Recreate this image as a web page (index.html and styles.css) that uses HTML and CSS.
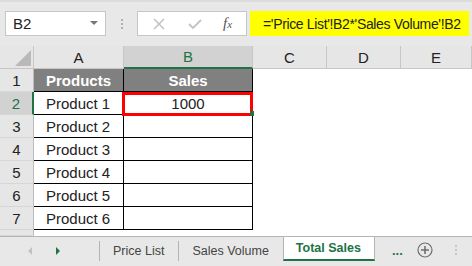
FILE: index.html
```html
<!DOCTYPE html>
<html lang="en">
<head>
  <meta charset="UTF-8">
  <title>Total Sales</title>
  <link rel="stylesheet" href="styles.css">
</head>
<body>

<div id="app">
  <div class="toolbar">
    <div class="name-box">
      <span>B2</span>
      <span class="drop"></span>
    </div>
    <div class="grip"><i></i><i></i><i></i></div>
    <div class="fx-box">
      <svg width="12" height="12" viewBox="0 0 12 12"><path d="M1 1 L11 11 M11 1 L1 11" stroke="#c3c3c3" stroke-width="1.6" fill="none"/></svg>
      <svg width="14" height="12" viewBox="0 0 14 12"><path d="M1 6 L5 10 L13 2" stroke="#c3c3c3" stroke-width="1.8" fill="none"/></svg>
      <span class="fx">f<small>x</small></span>
    </div>
    <div class="formula">='Price List'!B2*'Sales Volume'!B2</div>
  </div>

  <div class="sheet">
    <!-- column headers -->
    <div class="corner">
      <svg width="34" height="23" viewBox="0 0 34 23"><polygon points="31,4 31,20 15,20" fill="#b9b9b9"/></svg>
    </div>
    <div class="col-head">A</div>
    <div class="col-head active">B</div>
    <div class="col-head">C</div>
    <div class="col-head">D</div>
    <div class="col-head">E</div>

    <div class="row-head">1</div>
    <div class="cell title">Products</div>
    <div class="cell title">Sales</div>
    <div class="blank"></div><div class="blank"></div><div class="blank"></div>

    <div class="row-head active">2</div>
    <div class="cell">Product 1</div>
    <div class="cell num selected">1000</div>
    <div class="blank"></div><div class="blank"></div><div class="blank"></div>

    <div class="row-head">3</div>
    <div class="cell">Product 2</div>
    <div class="cell"></div>
    <div class="blank"></div><div class="blank"></div><div class="blank"></div>

    <div class="row-head">4</div>
    <div class="cell">Product 3</div>
    <div class="cell"></div>
    <div class="blank"></div><div class="blank"></div><div class="blank"></div>

    <div class="row-head">5</div>
    <div class="cell">Product 4</div>
    <div class="cell"></div>
    <div class="blank"></div><div class="blank"></div><div class="blank"></div>

    <div class="row-head">6</div>
    <div class="cell">Product 5</div>
    <div class="cell"></div>
    <div class="blank"></div><div class="blank"></div><div class="blank"></div>

    <div class="row-head">7</div>
    <div class="cell">Product 6</div>
    <div class="cell"></div>
    <div class="blank"></div><div class="blank"></div><div class="blank"></div>

    <div class="row-head"></div>
    <div class="blank"></div><div class="blank"></div>
    <div class="blank"></div><div class="blank"></div><div class="blank"></div>
  </div>

  <div class="tabbar">
    <div class="nav">
      <span class="arrow-left"></span>
      <span class="arrow-right"></span>
    </div>
    <div class="tab">Price List</div>
    <div class="tab">Sales Volume</div>
    <div class="tab current">Total Sales</div>
    <div class="more">...</div>
    <svg class="add" width="16" height="16" viewBox="0 0 16 16">
      <circle cx="8" cy="8" r="7" stroke="#6f6f6f" stroke-width="1.2" fill="none"/>
      <path d="M8 4 V12 M4 8 H12" stroke="#6f6f6f" stroke-width="1.6"/>
    </svg>
    <div class="grip tab-grip"><i></i><i></i><i></i></div>
  </div>
</div>

</body>
</html>
```

FILE: styles.css
```css
body {
  margin: 0;
  font-family: "Liberation Sans", Arial, sans-serif;
  background-color: #e6e6e6;
}
#app {
  width: 472px;
  height: 266px;
  overflow: hidden;
}
.toolbar {
  height: 46px;
  box-sizing: border-box;
  padding: 9px 0 0 5px;
  display: flex;
  align-items: flex-start;
  background-color: #e8e8e8;
  border-top: 2px solid #dcdcdc;
}
.name-box {
  width: 101px;
  height: 25px;
  box-sizing: border-box;
  background-color: #fff;
  border: 1px solid #c6c6c6;
  display: flex;
  align-items: center;
  justify-content: space-between;
  padding: 0 7px 0 7px;
  font-size: 15px;
  color: #222;
}
.drop {
  width: 0;
  height: 0;
  border-left: 4px solid transparent;
  border-right: 4px solid transparent;
  border-top: 4px solid #777;
  margin-top: -2px;
}
.grip {
  width: 31px;
  height: 25px;
  display: flex;
  flex-direction: column;
  align-items: center;
  justify-content: center;
  gap: 2px;
}
.grip i {
  width: 2px;
  height: 2px;
  background-color: #b0b0b0;
}
.fx-box {
  width: 110px;
  height: 25px;
  box-sizing: border-box;
  background-color: #fff;
  border: 1px solid #c6c6c6;
  display: flex;
  align-items: center;
  padding-left: 15px;
  gap: 23px;
}
.fx {
  font-family: "Liberation Serif", serif;
  font-style: italic;
  font-size: 15px;
  color: #555;
  margin-left: -2px;
}
.fx small {
  font-size: 11px;
}
.formula {
  width: 219px;
  height: 25px;
  margin-left: 3px;
  background-color: #ffff00;
  box-sizing: border-box;
  padding-left: 13px;
  display: flex;
  align-items: center;
  font-size: 14px;
  letter-spacing: -0.35px;
  color: #222;
  white-space: nowrap;
}
.sheet {
  display: grid;
  grid-template-columns: 34px 90px 129px 74px 74px 71px;
  grid-template-rows: repeat(8, 23px) 6px;
  background-color: #fff;
  font-size: 15px;
  color: #222;
}
.corner {
  background-color: #e6e6e6;
  border-right: 1px solid #c6c6c6;
  border-bottom: 1px solid #c6c6c6;
}
.corner svg {
  display: block;
}
.col-head {
  background-color: #e6e6e6;
  border-right: 1px solid #c6c6c6;
  border-bottom: 1px solid #c6c6c6;
  display: flex;
  align-items: center;
  justify-content: center;
}
.col-head.active {
  background-color: #d2d2d2;
  color: #217346;
  border-bottom: 2px solid #217346;
}
.row-head {
  background-color: #e6e6e6;
  border-right: 1px solid #bdbdbd;
  border-bottom: 1px solid #d6d6d6;
  display: flex;
  align-items: center;
  justify-content: center;
}
.row-head.active {
  background-color: #d2d2d2;
  color: #217346;
  border-right: 2px solid #217346;
}
.cell {
  border-right: 1px solid #000;
  border-bottom: 1px solid #000;
  display: flex;
  align-items: center;
  padding-left: 12px;
}
.cell.title {
  background-color: #808080;
  color: #fff;
  font-weight: bold;
  justify-content: center;
  padding-left: 0;
}
.cell.num {
  justify-content: center;
  padding-left: 0;
}
.selected {
  position: relative;
}
.selected::after {
  content: "";
  position: absolute;
  left: -2px;
  top: 0;
  right: -1px;
  bottom: -2px;
  border: 3px solid #ff0000;
  z-index: 2;
}
.selected::before {
  content: "";
  position: absolute;
  right: -2px;
  bottom: -2px;
  width: 4px;
  height: 5px;
  background-color: #217346;
  z-index: 3;
}
.blank {
  background-color: #fff;
}
.tabbar {
  height: 30px;
  box-sizing: border-box;
  border-top: 1px solid #b4b4b4;
  background-color: #e8e8e8;
  display: flex;
  align-items: flex-start;
  font-size: 12.5px;
  color: #444;
}
.nav {
  width: 100px;
  height: 20px;
  margin-top: 4px;
  border-right: 1px solid #b4b4b4;
  display: flex;
  align-items: center;
  padding-left: 28px;
  box-sizing: border-box;
  gap: 24px;
}
.arrow-left {
  width: 0;
  height: 0;
  border-top: 4px solid transparent;
  border-bottom: 4px solid transparent;
  border-right: 4px solid #c2c2c2;
}
.arrow-right {
  width: 0;
  height: 0;
  border-top: 4px solid transparent;
  border-bottom: 4px solid transparent;
  border-left: 4px solid #217346;
}
.tab {
  height: 20px;
  margin-top: 4px;
  padding: 0 14px 0 13px;
  border-right: 1px solid #b4b4b4;
  display: flex;
  align-items: center;
}
.tab.current {
  height: 22px;
  margin-top: 0;
  margin-left: -1px;
  padding: 0 13px 0 12px;
  background-color: #fff;
  border-left: 1px solid #b4b4b4;
  border-right: 1px solid #b4b4b4;
  border-bottom: 2px solid #217346;
  color: #217346;
  font-weight: bold;
}
.more {
  margin: 6px 0 0 17px;
  color: #217346;
  font-weight: bold;
  font-size: 13px;
}
.add {
  margin: 5px 0 0 14px;
}
.tab-grip {
  width: 30px;
  height: 22px;
  margin-left: 8px;
  margin-top: 2px;
}
.tab-grip i {
  background-color: #c6c6c6;
}
```
